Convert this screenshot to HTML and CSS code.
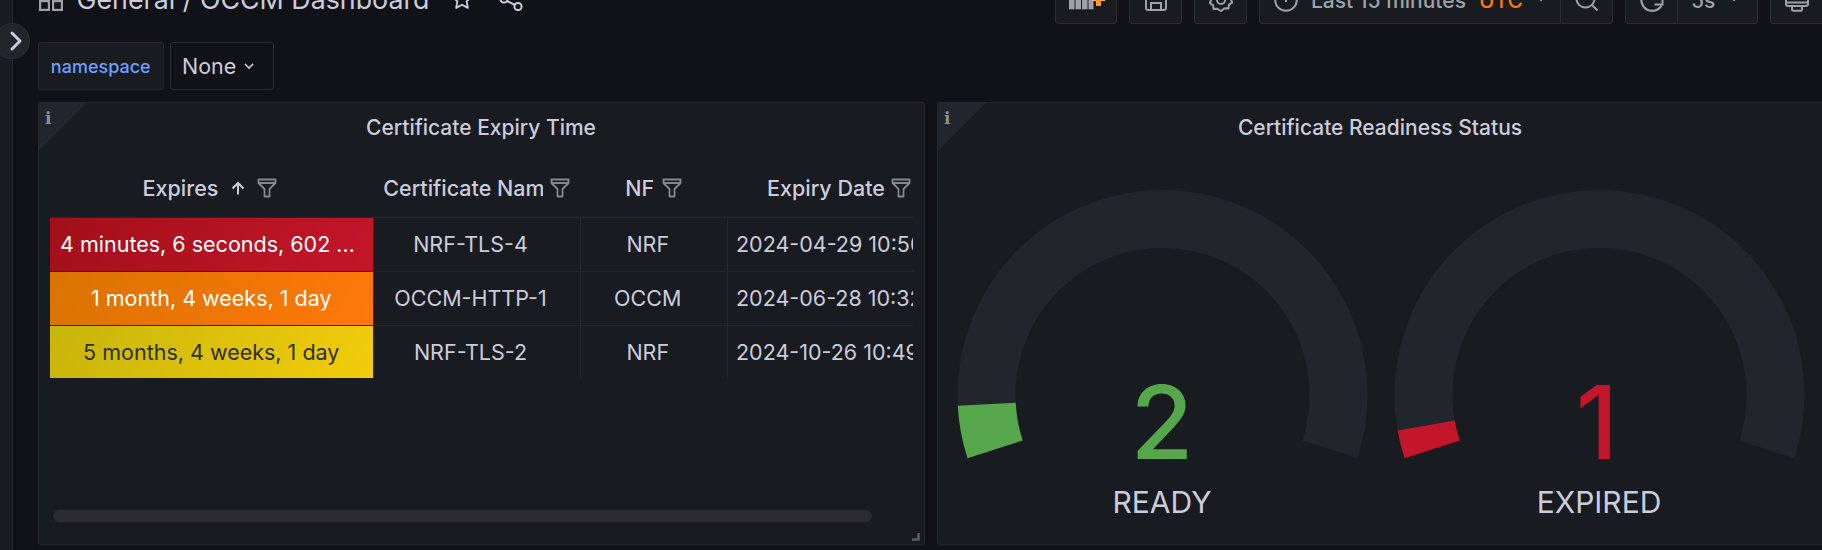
FILE: index.html
```html
<!DOCTYPE html>
<html lang="en">
<head>
<meta charset="utf-8">
<title>General / OCCM Dashboard</title>
<link rel="stylesheet" href="styles.css">
</head>
<body>
<div class="app">
  <aside class="sidebar"></aside>
  <button class="toggle" aria-label="Expand menu">
    <svg width="16" height="22" viewBox="0 0 16 22"><path d="M4 3l8 8-8 8" fill="none" stroke="#ccccdc" stroke-width="3" stroke-linecap="round" stroke-linejoin="round"/></svg>
  </button>
  <main class="main">
    <header class="topbar">
      <div class="crumbs">
        <svg class="crumb-icon" width="24" height="24" viewBox="0 0 24 24"><g fill="none" stroke="#9fa1a8" stroke-width="2.200"><rect x="1.100" y="1.100" width="8.800" height="8.800"/><rect x="14.100" y="1.100" width="8.800" height="8.800"/><rect x="1.100" y="14.100" width="8.800" height="8.800"/><rect x="14.100" y="14.100" width="8.800" height="8.800"/></g></svg>
        <span class="crumb-text">General / OCCM Dashboard</span>
        <svg class="star" width="22" height="22" viewBox="0 0 20 20"><path d="M10 1.500l2.600 5.600 6 .8-4.400 4.200 1.100 6L10 15.200l-5.300 2.900 1.100-6L1.400 7.900l6-.8z" fill="none" stroke="#ccccdc" stroke-width="1.700" stroke-linejoin="round"/></svg>
        <svg class="share" width="24" height="24" viewBox="0 0 24 24"><g fill="none" stroke="#ccccdc" stroke-width="2"><circle cx="5" cy="12" r="3.600"/><circle cx="19" cy="5" r="3.600"/><circle cx="19" cy="19.500" r="3.600"/><path d="M8 10.500l8-4M8 14l8 4"/></g></svg>
      </div>
      <div class="tools">
        <div class="tool tool-add">
          <svg width="38" height="24" viewBox="0 0 38 24"><g fill="#9fa1a8"><rect x="1" y="0" width="5.500" height="21.300"/><rect x="7.500" y="0" width="5.500" height="21.300"/><rect x="14" y="0" width="5.500" height="21.300"/><rect x="20.500" y="8" width="5" height="13.300"/></g><rect x="24" y="8" width="13" height="5" fill="#ffb357"/><rect x="28" y="0" width="5" height="18" fill="#ff9830"/></svg>
        </div>
        <div class="tool tool-save">
          <svg width="22" height="24" viewBox="0 0 22 24"><path d="M1 0v20c0 1 1 2 2 2h16c1 0 2-1 2-2V0" fill="none" stroke="#9fa1a8" stroke-width="2"/><path d="M6 22v-7h10v7" fill="none" stroke="#9fa1a8" stroke-width="2"/></svg>
        </div>
        <div class="tool tool-gear">
          <svg width="24" height="24" viewBox="0 0 24 24"><path d="M12 .5l2.400 3 3.800-.6 1 3.600 3.600 1.400-1 3.600 1.500 3-3.300 2.100-.6 3.800-3.800-.2L12 23l-3.600-2.200-3.800.2-.6-3.800L.7 15l1.500-3-1-3.600 3.600-1.400 1-3.600 3.800.6z" fill="none" stroke="#9fa1a8" stroke-width="2" stroke-linejoin="round"/><circle cx="12" cy="12" r="4" fill="none" stroke="#9fa1a8" stroke-width="2"/></svg>
        </div>
        <div class="tool-group tool-time">
          <div class="tool-part part-range">
            <svg width="24" height="24" viewBox="0 0 24 24"><circle cx="12" cy="12" r="10.800" fill="none" stroke="#9fa1a8" stroke-width="2"/><path d="M12 4v10" fill="none" stroke="#9fa1a8" stroke-width="2"/></svg>
            <span class="range">Last 15 minutes</span>
            <span class="utc">UTC</span>
            <svg class="chev" width="12" height="8" viewBox="0 0 12 8"><path d="M1.500 1.500L6 6l4.500-4.500" fill="none" stroke="#9fa1a8" stroke-width="2"/></svg>
          </div>
          <div class="tool-part part-zoom">
            <svg width="24" height="24" viewBox="0 0 24 24"><circle cx="10.500" cy="10.500" r="9" fill="none" stroke="#9fa1a8" stroke-width="2"/><path d="M5 10.500h11M17 17l5.500 5.500" fill="none" stroke="#9fa1a8" stroke-width="2"/></svg>
          </div>
        </div>
        <div class="tool-group tool-refresh">
          <div class="tool-part part-refresh">
            <svg width="24" height="24" viewBox="0 0 24 24"><path d="M12 1.200A10.800 10.800 0 1 0 21.500 17.500" fill="none" stroke="#9fa1a8" stroke-width="2.200"/><path d="M14.500 16.500h8v-8" fill="none" stroke="#9fa1a8" stroke-width="2"/></svg>
          </div>
          <div class="tool-part part-interval">
            <span class="range">5s</span>
            <svg class="chev" width="12" height="8" viewBox="0 0 12 8"><path d="M1.500 1.500L6 6l4.500-4.500" fill="none" stroke="#9fa1a8" stroke-width="2"/></svg>
          </div>
        </div>
        <div class="tool tool-tv">
          <svg width="24" height="24" viewBox="0 0 24 24"><g fill="none" stroke="#9fa1a8" stroke-width="2"><rect x="1" y="1" width="22" height="17" rx="2"/><path d="M1 14.500h22"/><path d="M7 18v3.500c0 .8.500 1.300 1.300 1.300h7.400c.8 0 1.300-.5 1.300-1.300V18"/></g></svg>
        </div>
      </div>
    </header>

    <section class="variables">
      <label class="var-label">namespace</label>
      <div class="var-select"><span>None</span>
        <svg width="10" height="7" viewBox="0 0 10 7"><path d="M1 1l4 4 4-4" fill="none" stroke="#ccccdc" stroke-width="1.600"/></svg>
      </div>
    </section>

    <section class="panels">
      <article class="panel">
        <span class="corner"></span><span class="corner-i">i</span>
        <h2 class="panel-title">Certificate Expiry Time</h2>
        <div class="table-wrap">
          <table class="data">
            <colgroup><col class="c1"><col class="c2"><col class="c3"><col class="c4"></colgroup>
            <thead>
              <tr>
                <th><span class="th-in th-sorted"><span class="th-text">Expires</span>
                  <svg class="sort" width="14" height="14" viewBox="0 0 14 14"><path d="M7 13.500V2M1.500 7.500L7 2l5.500 5.500" fill="none" stroke="#ccccdc" stroke-width="2"/></svg>
                  <svg class="funnel" width="20" height="20" viewBox="0 0 20 20"><path d="M1.500 1.500h17v3.500l-6 6v7.500h-5v-7.500l-6-6zM1.500 5h17" fill="none" stroke="#86888e" stroke-width="1.800" stroke-linejoin="round"/></svg></span></th>
                <th><span class="th-in th-clip"><span class="th-text th-name">Certificate Name</span>
                  <svg class="funnel" width="20" height="20" viewBox="0 0 20 20"><path d="M1.500 1.500h17v3.500l-6 6v7.500h-5v-7.500l-6-6zM1.500 5h17" fill="none" stroke="#86888e" stroke-width="1.800" stroke-linejoin="round"/></svg></span></th>
                <th><span class="th-in"><span class="th-text">NF</span>
                  <svg class="funnel" width="20" height="20" viewBox="0 0 20 20"><path d="M1.500 1.500h17v3.500l-6 6v7.500h-5v-7.500l-6-6zM1.500 5h17" fill="none" stroke="#86888e" stroke-width="1.800" stroke-linejoin="round"/></svg></span></th>
                <th><span class="th-in th-date"><span class="th-text">Expiry Date</span>
                  <svg class="funnel" width="20" height="20" viewBox="0 0 20 20"><path d="M1.500 1.500h17v3.500l-6 6v7.500h-5v-7.500l-6-6zM1.500 5h17" fill="none" stroke="#86888e" stroke-width="1.800" stroke-linejoin="round"/></svg></span></th>
              </tr>
            </thead>
            <tbody>
              <tr><td class="exp exp-red"><span class="exp-text">4 minutes, 6 seconds, 602 milliseconds</span></td><td>NRF-TLS-4</td><td>NRF</td><td class="date">2024-04-29 10:50:12</td></tr>
              <tr><td class="exp exp-orange"><span class="exp-text">1 month, 4 weeks, 1 day</span></td><td>OCCM-HTTP-1</td><td>OCCM</td><td class="date">2024-06-28 10:32:41</td></tr>
              <tr><td class="exp exp-yellow"><span class="exp-text">5 months, 4 weeks, 1 day</span></td><td>NRF-TLS-2</td><td>NRF</td><td class="date">2024-10-26 10:49:05</td></tr>
            </tbody>
          </table>
        </div>
        <div class="scrollbar"></div>
        <svg class="resize" width="8" height="8" viewBox="0 0 8 8"><path d="M6.500 0v6.500H0" fill="none" stroke="#5a5c61" stroke-width="2.500"/></svg>
      </article>

      <article class="panel">
        <span class="corner"></span><span class="corner-i">i</span>
        <h2 class="panel-title">Certificate Readiness Status</h2>
        <div class="gauges">
          <svg class="gauge" viewBox="0 0 437 393" width="437" height="393">
            <path class="track" d="M23.530 306.350A205 205 0 1 1 413.470 306.350L358.300 288.430A147 147 0 1 0 78.700 288.430Z"/>
            <path class="fill-green" d="M23.530 306.350A205 205 0 0 1 13.780 253.730L71.700 250.690A147 147 0 0 0 78.700 288.430Z"/>
            <text class="g-value g-green" x="218" y="307">2</text>
            <text class="g-label" x="218" y="360.700">READY</text>
          </svg>
          <svg class="gauge" viewBox="0 0 437 393" width="437" height="393">
            <path class="track" d="M23.530 306.350A205 205 0 1 1 413.470 306.350L358.300 288.430A147 147 0 1 0 78.700 288.430Z"/>
            <path class="fill-red" d="M23.530 306.350A205 205 0 0 1 16.610 278.600L73.730 268.530A147 147 0 0 0 78.700 288.430Z"/>
            <text class="g-value g-red" x="216" y="307">1</text>
            <text class="g-label" x="218" y="360.700">EXPIRED</text>
          </svg>
        </div>
      </article>
    </section>
  </main>
</div>
</body>
</html>
```
FILE: styles.css
```css
* { box-sizing: border-box; }
html, body { margin: 0; padding: 0; height: 100%; background: #111217; }
body { font-family: Inter, "Noto Sans", "Liberation Sans", sans-serif; color: #ccccdc; overflow: hidden; }
.app { display: flex; width: 1822px; height: 550px; overflow: hidden; position: relative; }
.sidebar { width: 13px; flex: none; background: #181b1f; border-right: 1px solid #24272c; }
.toggle { position: absolute; left: -6px; top: 23px; width: 36px; height: 36px; border-radius: 50%; background: #22252b; border: 1px solid #2c2f35; padding: 0 0 0 8px; display: flex; align-items: center; justify-content: center; }
.main { flex: none; width: 1813px; padding-left: 24.500px; display: flex; flex-direction: column; }

.topbar { height: 47px; margin-top: -23.500px; display: flex; justify-content: space-between; align-items: stretch; flex: none; }
.crumbs { display: flex; align-items: center; height: 47px; padding-bottom: 3px; color: #ccccdc; }
.crumb-icon { margin: 0 0 0 1px; }
.crumb-text { font-size: 26.800px; font-weight: 400; margin-left: 14px; white-space: nowrap; }
.star { margin-left: 21px; }
.share { margin-left: 26px; }
.tools { display: flex; gap: 12px; margin-right: -4px; }
.tool, .tool-group { height: 47px; background: #181b1f; border: 1px solid #2a2d33; border-radius: 3px; display: flex; align-items: center; }
.tool-add { width: 62px; padding-left: 12px; }
.tool-save { width: 53px; justify-content: center; }
.tool-gear { width: 53px; justify-content: center; }
.tool-time { width: 354px; }
.tool-refresh { width: 133px; }
.tool-tv { width: 60px; padding-left: 14px; }
.tool svg, .tool-part svg { flex: none; }
.tool-part { display: flex; align-items: center; height: 100%; }
.part-range { width: 301px; padding-left: 14px; border-right: 1px solid #2a2d33; }
.part-zoom { flex: 1; justify-content: center; }
.part-refresh { width: 52px; justify-content: center; border-right: 1px solid #2a2d33; }
.part-interval { flex: 1; padding-left: 13px; }
.range { font-size: 21px; font-weight: 500; color: #9fa1a8; margin-left: 13px; white-space: nowrap; }
.part-interval .range { margin-left: 0; }
.utc { font-size: 21px; font-weight: 500; color: #ff780a; margin-left: 13px; }
.tool-part .chev { margin-left: 12px; margin-top: -5px; }
.part-interval .chev { margin-left: 13px; }

.variables { display: flex; gap: 6px; margin-top: 18.500px; height: 48px; flex: none; }
.var-label { width: 126.500px; height: 48px; background: #181b1f; border: 1px solid #24272c; border-radius: 3px; color: #6e9fff; font-size: 18px; font-weight: 500; display: flex; align-items: center; justify-content: center; }
.var-select { width: 104px; height: 48px; background: #111217; border: 1px solid #2a2d33; border-radius: 3px; font-size: 21.500px; color: #ccccdc; display: flex; align-items: center; padding-left: 11px; gap: 8px; }

.panels { display: grid; grid-template-columns: 887px 887px; gap: 12px; margin-top: 12px; height: 443px; flex: none; }
.panel { position: relative; background: #181b1f; border: 1px solid #24272c; border-radius: 3px; display: flex; flex-direction: column; overflow: hidden; }
.corner { position: absolute; left: 0; top: 0; width: 0; height: 0; border-style: solid; border-width: 48px 48px 0 0; border-color: #22252b transparent transparent transparent; }
.corner-i { position: absolute; left: 6.500px; top: 5px; font-family: "DejaVu Serif", serif; font-weight: 700; font-size: 17px; color: #8e9095; line-height: 20px; }
.panel-title { margin: 0; height: 48px; flex: none; display: flex; align-items: center; justify-content: center; font-size: 21px; font-weight: 500; color: #ccccdc; }

.table-wrap { margin: 1px 0 0 11.500px; width: 863px; height: 358px; overflow: hidden; flex: none; }
.data { border-collapse: collapse; table-layout: fixed; width: 863px; font-size: 21.500px; }
.c1 { width: 323px; } .c2 { width: 207px; } .c3 { width: 147.500px; } .c4 { width: 185.500px; }
.data th { height: 65px; padding: 8px 0 0; font-weight: 500; color: #ccccdc; border-bottom: 1px solid #24272c; white-space: nowrap; }
.th-in { display: flex; align-items: center; justify-content: center; }
.th-text { display: block; }
.th-name { width: 159.500px; overflow: hidden; }
.th-date { justify-content: flex-start; padding-left: 39.500px; width: 200px; }
.sort { margin-left: 13px; }
.funnel { margin-left: 8px; flex: none; }
.th-sorted { padding-right: 3px; }
.th-sorted .funnel { margin-left: 12px; }
.th-clip .funnel { margin-left: 7px; }
.th-date .funnel { margin-left: 6px; }
.data td { height: 54px; padding: 0 20px 0 8px; text-align: center; border-bottom: 1px solid #24272c; border-left: 1px solid #24272c; white-space: nowrap; overflow: hidden; color: #ccccdc; }
.data tbody tr:last-child td { border-bottom: 0; height: 53px; }
.data td.date { text-align: left; }
.data td.exp { border-left: 0; padding: 0 10px; }
.exp-text { display: block; overflow: hidden; text-overflow: ellipsis; }
.exp-red { background: linear-gradient(120deg, #a20f19, #c4162a); color: #fff !important; }
.exp-orange { background: linear-gradient(120deg, #d87300, #ff780a); color: #fff !important; }
.exp-yellow { background: linear-gradient(120deg, #c6b50b, #f2cc0c); color: #2e2f1c !important; }
.scrollbar { width: 819px; height: 12px; margin: 0 0 0 14.500px; background: #2a2c31; border-radius: 6px; flex: none; }
.resize { position: absolute; right: 4px; bottom: 3px; }

.gauges { display: grid; grid-template-columns: 437px 437px; padding: 1px 0 0 6.500px; }
.gauge { display: block; }
.track { fill: #22252b; }
.fill-green { fill: #56a64b; }
.fill-red { fill: #c4162a; }
.g-value { font-size: 102px; font-weight: 450; text-anchor: middle; }
.g-green { fill: #56a64b; }
.g-red { fill: #c4162a; }
.g-label { font-size: 30px; text-anchor: middle; fill: #ccccdc; }
```
